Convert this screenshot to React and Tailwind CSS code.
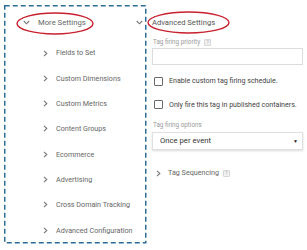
import React from 'react';

const items = [
  'Fields to Set',
  'Custom Dimensions',
  'Custom Metrics',
  'Content Groups',
  'Ecommerce',
  'Advertising',
  'Cross Domain Tracking',
  'Advanced Configuration',
];

const ChevronRight = () => (
  <svg width="5" height="7" viewBox="0 0 5 7" className="shrink-0">
    <path d="M1 0.8 L3.8 3.5 L1 6.2" fill="none" stroke="#777" strokeWidth="1.1" />
  </svg>
);

const ChevronDown = () => (
  <svg width="7" height="5" viewBox="0 0 7 5" className="shrink-0">
    <path d="M0.8 1 L3.5 3.8 L6.2 1" fill="none" stroke="#777" strokeWidth="1.1" />
  </svg>
);

const Help = () => (
  <span className="ml-[4px] inline-flex h-[7px] w-[7px] items-center justify-center rounded-[1px] border border-[#d6d6d6] bg-[#f1f1f1] text-[5px] leading-none text-[#aaa]">
    ?
  </span>
);

const Checkbox = ({ label }) => (
  <div className="flex h-[12px] items-center">
    <span className="ml-[5px] h-[9px] w-[9px] shrink-0 rounded-[1px] border-[1.5px] border-[#6b6b6b]" />
    <span className="ml-[6px] whitespace-nowrap text-[7.1px] leading-none text-[#444]">{label}</span>
  </div>
);

const App = () => {
  return (
    <div
      className="relative flex h-[250px] w-[307px] overflow-hidden bg-white pl-[4px] pt-[5px]"
      style={{ fontFamily: 'Roboto, "Liberation Sans", sans-serif' }}
    >
      {/* More Settings panel */}
      <div className="flex h-[238px] w-[142px] shrink-0 flex-col">
        <div className="flex h-[36px] items-center justify-between pl-[19px] pr-[3px]">
          <div className="flex items-center">
            <ChevronDown />
            <span className="ml-[8px] text-[7.7px] leading-none text-[#666]">More Settings</span>
          </div>
          <ChevronDown />
        </div>
        {items.map((item) => (
          <div key={item} className="flex h-[25.8px] items-center pl-[39px]">
            <ChevronRight />
            <span className="ml-[8px] whitespace-nowrap text-[7.2px] leading-none text-[#666]">{item}</span>
          </div>
        ))}
      </div>

      {/* Advanced Settings */}
      <div className="ml-[3px] flex w-[154px] flex-col">
        <div className="mt-[12px] flex h-[12px] items-center pl-[3px] text-[7.6px] leading-none text-[#555]">
          Advanced Settings
        </div>
        <div className="mt-[9px] flex h-[8px] items-center pl-[4px] text-[6.3px] leading-none text-[#999]">
          Tag firing priority
          <Help />
        </div>
        <div className="ml-[3px] mt-[2px] h-[17px] w-[151px] border border-[#dcdcdc]" />
        <div className="mt-[10px]">
          <Checkbox label="Enable custom tag firing schedule." />
        </div>
        <div className="mt-[11.5px]">
          <Checkbox label="Only fire this tag in published containers." />
        </div>
        <div className="mt-[10.5px] flex h-[8px] items-center pl-[4px] text-[6.3px] leading-none text-[#999]">
          Tag firing options
        </div>
        <div className="ml-[3px] mt-[3px] flex h-[18px] w-[151px] items-center justify-between border border-[#e0e0e0] pl-[7px] pr-[4px] shadow-[0_1px_2px_rgba(0,0,0,0.15)]">
          <span className="text-[7.7px] leading-none text-[#333]">Once per event</span>
          <span className="text-[5px] leading-none text-[#222]">▼</span>
        </div>
        <div className="mt-[17px] flex h-[12px] items-center pl-[7px]">
          <ChevronRight />
          <span className="ml-[7px] text-[7.2px] leading-none text-[#666]">Tag Sequencing</span>
          <Help />
        </div>
      </div>

      {/* annotations: dashed frame and red ellipses */}
      <svg className="pointer-events-none absolute left-0 top-0" width="307" height="250">
        <rect
          x="4.75"
          y="5.75"
          width="141"
          height="237"
          fill="none"
          stroke="#2c6e9b"
          strokeWidth="1.5"
          strokeDasharray="5 3"
        />
        <ellipse cx="55" cy="23.5" rx="38" ry="10.5" fill="none" stroke="#c8202e" strokeWidth="1.4" />
        <ellipse cx="188.5" cy="22.5" rx="40.5" ry="10.5" fill="none" stroke="#c8202e" strokeWidth="1.4" />
      </svg>
    </div>
  );
};

export default App;
